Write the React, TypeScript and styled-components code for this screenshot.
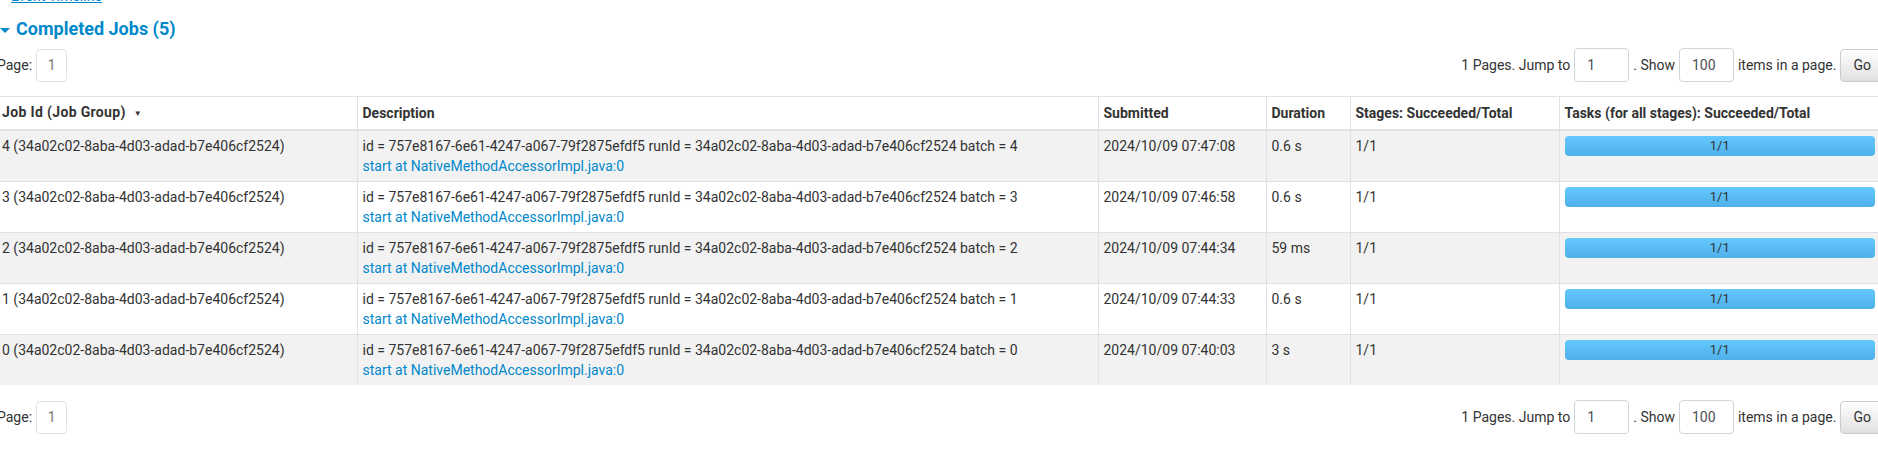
import React from 'react';
import styled, { createGlobalStyle } from 'styled-components';

const GlobalStyle = createGlobalStyle`
  html, body { margin: 0; padding: 0; background: #fff; overflow: hidden; }
  body {
    font-family: Roboto, "Open Sans", sans-serif;
    font-size: 14px;
    line-height: 20px;
    color: #333;
  }
`;

const Page = styled.div`
  width: 1887px;
  margin-left: -3px;
`;

const TimelineToggle = styled.div`
  display: flex;
  align-items: center;
  gap: 8px;
  height: 20px;
  margin-top: -14px;
  padding-left: 1px;
`;

const ArrowClosed = styled.span`
  width: 0;
  height: 0;
  border-top: 5px solid transparent;
  border-bottom: 5px solid transparent;
  border-left: 5px solid #0088cc;
`;

const ArrowOpen = styled.span`
  width: 0;
  height: 0;
  border-left: 5px solid transparent;
  border-right: 5px solid transparent;
  border-top: 5px solid #0088cc;
  margin-top: 2px;
`;

const Link = styled.a<{ $underline?: boolean }>`
  color: #0088cc;
  text-decoration: ${(p) => (p.$underline ? 'underline' : 'none')};
  cursor: pointer;
`;

const Heading = styled.h4`
  display: flex;
  align-items: center;
  gap: 6px;
  margin: 11px 0 0 0;
  padding-left: 3px;
  font-size: 18px;
  line-height: 24px;
  font-weight: 700;
  color: #0088cc;
`;

const PagerRow = styled.div<{ $top: number }>`
  display: flex;
  justify-content: space-between;
  align-items: center;
  height: 34px;
  margin-top: ${(p) => p.$top}px;
`;

const PagerGroup = styled.div`
  display: flex;
  align-items: center;
  gap: 4px;
`;

const Label = styled.span`
  white-space: nowrap;
`;

const PageBox = styled.span`
  display: inline-flex;
  align-items: center;
  justify-content: center;
  box-sizing: border-box;
  width: 31px;
  height: 33px;
  border: 1px solid #dee2e6;
  border-radius: 4px;
  color: #7a7470;
`;

const NumInput = styled.span`
  display: inline-flex;
  align-items: center;
  box-sizing: border-box;
  width: 55px;
  height: 34px;
  padding: 0 12px;
  border: 1px solid #ced4da;
  border-radius: 4px;
  color: #495057;
`;

const GoButton = styled.button`
  box-sizing: border-box;
  height: 33px;
  padding: 0 12px;
  font-family: inherit;
  font-size: 14px;
  color: #333;
  border: 1px solid #ccc;
  border-radius: 4px;
  background: linear-gradient(to bottom, #ffffff, #e0e0e0);
`;

const Table = styled.table`
  width: 1883px;
  table-layout: fixed;
  border-collapse: collapse;
  margin-top: 14px;
  border-top: 1px solid #dee2e6;
`;

const Th = styled.th`
  text-align: left;
  font-weight: 700;
  padding: 5px;
  border-bottom: 2px solid #dee2e6;
  border-left: 1px solid #dee2e6;
  white-space: nowrap;
  &:first-child { border-left: none; }
`;

const WideLabel = styled.span`
  letter-spacing: 0.35px;
`;

const SortArrow = styled.span`
  font-size: 8px;
  margin-left: 8px;
  vertical-align: 1px;
`;

const Tr = styled.tr`
  &:nth-child(odd) { background: #f2f2f2; }
`;

const Td = styled.td`
  vertical-align: top;
  padding: 5px;
  border-top: 1px solid #dee2e6;
  border-left: 1px solid #dee2e6;
  white-space: nowrap;
  &:first-child { border-left: none; }
`;

const Progress = styled.div`
  height: 20px;
  border-radius: 4px;
  background: linear-gradient(to bottom, #64c8ff, #4fb0ea);
  font-size: 13px;
  line-height: 20px;
  text-align: center;
  color: #333;
`;

const jobs = [
  { id: 4, submitted: '2024/10/09 07:47:08', duration: '0.6 s' },
  { id: 3, submitted: '2024/10/09 07:46:58', duration: '0.6 s' },
  { id: 2, submitted: '2024/10/09 07:44:34', duration: '59 ms' },
  { id: 1, submitted: '2024/10/09 07:44:33', duration: '0.6 s' },
  { id: 0, submitted: '2024/10/09 07:40:03', duration: '3 s' },
];

const group = '34a02c02-8aba-4d03-adad-b7e406cf2524';

const Pager: React.FC<{ top: number }> = ({ top }) => (
  <PagerRow $top={top}>
    <PagerGroup>
      <Label>Page:</Label>
      <PageBox>1</PageBox>
    </PagerGroup>
    <PagerGroup>
      <Label>1 Pages. Jump to</Label>
      <NumInput>1</NumInput>
      <Label>. Show</Label>
      <NumInput>100</NumInput>
      <Label>items in a page.</Label>
      <GoButton>Go</GoButton>
    </PagerGroup>
  </PagerRow>
);

export default function App() {
  return (
    <Page>
      <GlobalStyle />
      <TimelineToggle>
        <ArrowClosed />
        <Link $underline>Event Timeline</Link>
      </TimelineToggle>
      <Heading>
        <ArrowOpen />
        <span>Completed Jobs (5)</span>
      </Heading>
      <Pager top={7} />
      <Table>
        <colgroup>
          <col style={{ width: 360 }} />
          <col style={{ width: 741 }} />
          <col style={{ width: 168 }} />
          <col style={{ width: 84 }} />
          <col style={{ width: 209 }} />
          <col />
        </colgroup>
        <thead>
          <tr>
            <Th>
              <WideLabel>Job Id (Job Group)</WideLabel>
              <SortArrow>▼</SortArrow>
            </Th>
            <Th>Description</Th>
            <Th>Submitted</Th>
            <Th>Duration</Th>
            <Th>Stages: Succeeded/Total</Th>
            <Th>Tasks (for all stages): Succeeded/Total</Th>
          </tr>
        </thead>
        <tbody>
          {jobs.map((j) => (
            <Tr key={j.id}>
              <Td>
                {j.id} ({group})
              </Td>
              <Td>
                <div>
                  id = 757e8167-6e61-4247-a067-79f2875efdf5 runId = {group} batch = {j.id}
                </div>
                <Link>start at NativeMethodAccessorImpl.java:0</Link>
              </Td>
              <Td>{j.submitted}</Td>
              <Td>{j.duration}</Td>
              <Td>1/1</Td>
              <Td>
                <Progress>1/1</Progress>
              </Td>
            </Tr>
          ))}
        </tbody>
      </Table>
      <Pager top={15} />
    </Page>
  );
}
